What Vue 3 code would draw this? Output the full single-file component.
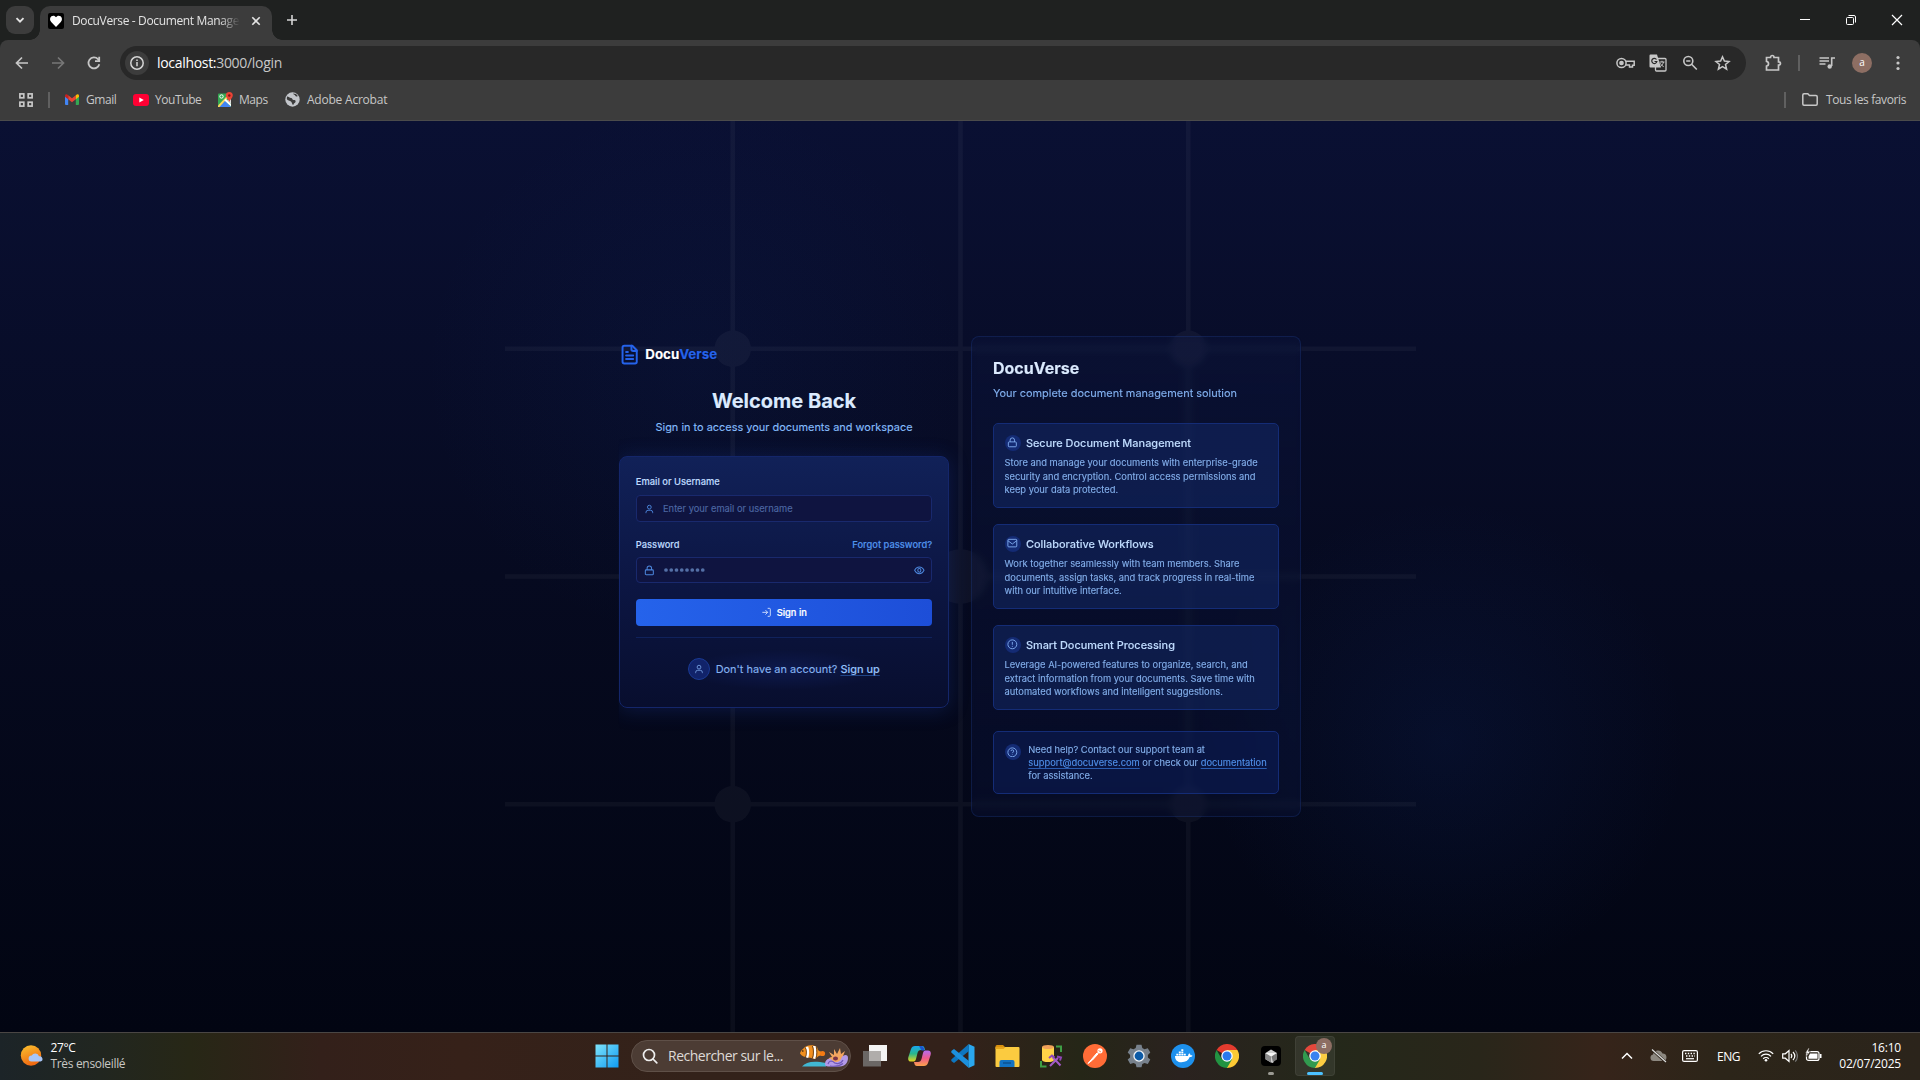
<script setup>
const bookmarks = [
  { id: 'gmail', label: 'Gmail' },
  { id: 'youtube', label: 'YouTube' },
  { id: 'maps', label: 'Maps' },
  { id: 'acrobat', label: 'Adobe Acrobat' },
]

const features = [
  {
    icon: 'lock',
    title: 'Secure Document Management',
    lines: [
      'Store and manage your documents with enterprise-grade',
      'security and encryption. Control access permissions and',
      'keep your data protected.',
    ],
  },
  {
    icon: 'mail',
    title: 'Collaborative Workflows',
    lines: [
      'Work together seamlessly with team members. Share',
      'documents, assign tasks, and track progress in real-time',
      'with our intuitive interface.',
    ],
  },
  {
    icon: 'alert',
    title: 'Smart Document Processing',
    lines: [
      'Leverage AI-powered features to organize, search, and',
      'extract information from your documents. Save time with',
      'automated workflows and intelligent suggestions.',
    ],
  },
]

const nodes = [
  { x: 200, y: 200, r: 16 },
  { x: 600, y: 200, r: 16 },
  { x: 400, y: 400, r: 24 },
  { x: 200, y: 600, r: 16 },
  { x: 600, y: 600, r: 16 },
]
</script>

<template>
  <div class="screen">
    <header class="browser">
      <div class="tabstrip">
        <div class="tab-search">
          <svg width="28" height="28" viewBox="0 0 28 28"><path d="M10.500 12.200 14 15.700l3.500-3.500" fill="none" stroke="#e3e3e3" stroke-width="1.900" /></svg>
        </div>
        <div class="tab">
          <svg class="favicon" width="16" height="16" viewBox="0 0 16 16">
            <rect width="16" height="16" rx="2" fill="#000" />
            <path d="M8 14 3.200 9C1.500 7.200 1.700 4.500 3.400 3.300 5 2.100 7.100 2.600 8 4.200c.9-1.600 3-2.100 4.600-.9 1.700 1.200 1.900 3.900.2 5.700z" fill="#fff" />
          </svg>
          <span class="tab-title">DocuVerse - Document Manage</span>
          <svg class="tab-close" width="10" height="10" viewBox="0 0 10 10"><path d="m1.300 1.300 7.400 7.400m0-7.400L1.300 8.700" stroke="#e3e3e3" stroke-width="1.600" /></svg>
        </div>
        <svg class="new-tab" width="12" height="12" viewBox="0 0 12 12"><path d="M6 1v10M1 6h10" stroke="#d5d5d5" stroke-width="1.600" /></svg>
        <div class="window-controls">
          <svg width="12" height="12" viewBox="0 0 12 12"><path d="M1 5.500h10" stroke="#fff" /></svg>
          <svg width="12" height="12" viewBox="0 0 12 12" fill="none" stroke="#fff"><rect x="1.500" y="3.500" width="7" height="7" rx="1" /><path d="M3.500 1.500H9a1.500 1.500 0 0 1 1.500 1.500v5.500" /></svg>
          <svg width="12" height="12" viewBox="0 0 12 12"><path d="m1 1 10 10m0-10L1 11" stroke="#fff" stroke-width="1.200" /></svg>
        </div>
      </div>

      <div class="toolbar">
        <div class="nav">
          <svg width="16" height="16" viewBox="0 0 16 16" fill="none" stroke="#c7c7c7" stroke-width="1.700"><path d="M14 8H3M8 2.500 2.500 8 8 13.500" /></svg>
          <svg width="16" height="16" viewBox="0 0 16 16" fill="none" stroke="#777" stroke-width="1.700"><path d="M2 8h11M8 2.500 13.500 8 8 13.500" /></svg>
          <svg width="16" height="16" viewBox="0 0 16 16" fill="none" stroke="#c7c7c7" stroke-width="1.800"><path d="M13.300 9.200A5.500 5.500 0 1 1 12 4.200l1.200 1.300" /><path d="M13.200 1.800v4.300H9" /></svg>
        </div>
        <div class="omnibox">
          <span class="site-info">
            <svg width="16" height="16" viewBox="0 0 16 16" fill="none" stroke="#d5d5d5" stroke-width="1.500"><circle cx="8" cy="8" r="6.200" /><path d="M8 7v4.200M8 4.600v1.500" /></svg>
          </span>
          <span class="url"><span class="host">localhost:</span>3000/login</span>
          <div class="omni-icons">
            <svg width="20" height="16" viewBox="0 0 20 16" fill="none" stroke="#c7c7c7" stroke-width="1.500"><circle cx="6.500" cy="8" r="4.600" /><circle cx="6.500" cy="8" r="1.600" fill="#c7c7c7" /><path d="M10.800 6.200h8.400v4h-1.700V12h-3v-2H10.800" /></svg>
            <svg width="18" height="18" viewBox="0 0 18 18"><rect x="6.500" y="4.500" width="10.500" height="12.500" rx="1" fill="none" stroke="#c7c7c7" stroke-width="1.300" /><path d="M1.500.5H8l4 13H1.500a1 1 0 0 1-1-1v-11a1 1 0 0 1 1-1z" fill="#c7c7c7" /><path d="M7.500 5.500a2.600 2.600 0 1 0 .4 2H5.500" fill="none" stroke="#282828" stroke-width="1.200" /><path d="M10.500 8H15.500M13 6.800V8m1.500 0c-.5 2.200-1.800 3.700-3 4.500m-.2-3.200c1 1.800 2.200 2.700 3.400 3.400" fill="none" stroke="#c7c7c7" /></svg>
            <svg width="16" height="16" viewBox="0 0 16 16" fill="none" stroke="#c7c7c7" stroke-width="1.600"><circle cx="6.300" cy="6" r="4.500" /><path d="M4.200 6h4.200M9.600 9.300l5.200 5.200" /></svg>
            <svg width="17" height="16" viewBox="0 0 17 16" fill="none" stroke="#c7c7c7" stroke-width="1.500"><path d="m8.500 1.900 1.900 4.200 4.600.4-3.500 3 1.100 4.600-4.100-2.500-4.100 2.500 1.100-4.600-3.500-3 4.600-.4z" /></svg>
          </div>
        </div>
        <div class="actions">
          <svg width="18" height="18" viewBox="0 0 18 18" fill="none" stroke="#c7c7c7" stroke-width="1.700"><path d="M2.500 3.500H6.500C6.500.8 10 .8 10 3.500h4.500v4.300c2.600 0 2.600 3.200 0 3.200v5h-12v-3.800c2.700-.5 2.700-4.300 0-4.800z" /></svg>
          <i class="rule" />
          <svg width="16" height="14" viewBox="0 0 16 14" fill="none" stroke="#c7c7c7" stroke-width="1.600"><path d="M.5 2h9.500M.5 5h9.500M.5 8h6M12.700 10V2H16" /><circle cx="10.700" cy="10.500" r="2.200" fill="#c7c7c7" stroke="none" /></svg>
          <span class="avatar">a</span>
          <svg width="4" height="16" viewBox="0 0 4 16" fill="#c7c7c7"><circle cx="2" cy="2.500" r="1.600" /><circle cx="2" cy="8" r="1.600" /><circle cx="2" cy="13.500" r="1.600" /></svg>
        </div>
      </div>

      <div class="bookmarks">
        <svg class="apps" width="14" height="14" viewBox="0 0 14 14" fill="none" stroke="#c7c7c7" stroke-width="1.700"><rect x=".9" y=".9" width="3.900" height="3.900" /><rect x="9.200" y=".9" width="3.900" height="3.900" /><rect x=".9" y="9.200" width="3.900" height="3.900" /><rect x="9.200" y="9.200" width="3.900" height="3.900" /></svg>
        <i class="rule" />
        <div v-for="b in bookmarks" :key="b.id" class="bookmark" :class="b.id">
          <svg v-if="b.id === 'gmail'" width="14" height="11" viewBox="0 0 14 11"><path d="M0 1.500V10a1 1 0 0 0 1 1h2.200V4z" fill="#4285f4" /><path d="M14 1.500V10a1 1 0 0 1-1 1h-2.200V4z" fill="#34a853" /><path d="M3.200 1.200 7 4.200l3.800-3v4L7 8.200 3.200 5.200z" fill="#ea4335" /><path d="M0 1.800C0 .2 1.700-.4 3.200 1.200v4L0 2.800z" fill="#c5221f" /><path d="M14 1.800c0-1.600-1.700-2.200-3.200-.6v4L14 2.800z" fill="#fbbc04" /></svg>
          <svg v-else-if="b.id === 'youtube'" width="16" height="12" viewBox="0 0 16 12"><rect width="16" height="12" rx="3" fill="#ff0033" /><path d="m6.300 3.500 4.500 2.500-4.500 2.500z" fill="#fff" /></svg>
          <svg v-else-if="b.id === 'maps'" width="15" height="15" viewBox="0 0 15 15"><rect y="1.500" width="13" height="13.500" rx="1" fill="#34a853" /><path d="M1 15 7 8.500 13 15z" fill="#4285f4" /><path d="m9 8 4 4v-5z" fill="#ddd" /><path d="m0 13.500 8.500-9 1.200 1.500L1.500 15H0z" fill="#fbd75b" /><path d="m6.200 8.300 1.600-1.600L13 12v2.500z" fill="#fff" /><circle cx="3.500" cy="4.500" r="1.700" fill="none" stroke="#fff" /><path d="M11.300 0a3.500 3.500 0 0 1 3.500 3.500c0 2.200-2.500 3.500-3.500 6.500-1-3-3.500-4.300-3.500-6.500A3.500 3.500 0 0 1 11.300 0z" fill="#ea4335" /><circle cx="11.300" cy="3.500" r="1.200" fill="#811411" /></svg>
          <svg v-else width="15" height="15" viewBox="0 0 15 15"><circle cx="7.500" cy="7.500" r="7.200" fill="#c3c6cb" /><path d="M2 4.500c2 .3 2.500 1.500 4 1.500 1.700 0 1 2 2.700 2 1.500 0 2.300.5 1.800 2s-2 1-2.200 3c-1.500-.3-1-2.500-2.300-3.500C4.800 8.500 2.500 8.500 1.800 7zM8 1.500c.5 1.500 2 1 2.300 2.300.2 1 1.700 1 2.500.2L11 2z" fill="#3c3c3c" /></svg>
          <span>{{ b.label }}</span>
        </div>
        <div class="all-bookmarks">
          <i class="rule" />
          <svg width="16" height="13" viewBox="0 0 16 13" fill="none" stroke="#c7c7c7" stroke-width="1.500"><path d="M.8 11V2a1.200 1.200 0 0 1 1.200-1.200h3.800l1.700 1.700H14a1.200 1.200 0 0 1 1.200 1.200V11a1.200 1.200 0 0 1-1.200 1.200H2A1.200 1.200 0 0 1 .8 11z" /></svg>
          <span>Tous les favoris</span>
        </div>
      </div>
    </header>

    <main class="page">
      <svg class="grid-art" viewBox="0 0 800 800">
        <path d="M0 200h800M0 400h800M0 600h800M200 0v800M400 0v800M600 0v800" stroke="#fff" stroke-width="4" fill="none" />
        <circle v-for="(n, i) in nodes" :key="i" :cx="n.x" :cy="n.y" :r="n.r" fill="#fff" />
      </svg>

      <div class="content">
        <section class="login">
          <div class="brand">
            <svg class="brand-icon" viewBox="0 0 24 24"><path d="M15 2H6a2 2 0 0 0-2 2v16a2 2 0 0 0 2 2h12a2 2 0 0 0 2-2V7z" /><path d="M14 2v4a2 2 0 0 0 2 2h4M10 9H8M16 13H8M16 17H8" /></svg>
            <span class="brand-name">Docu<b>Verse</b></span>
          </div>
          <h1>Welcome Back</h1>
          <p class="sub">Sign in to access your documents and workspace</p>

          <form class="card" @submit.prevent>
            <label class="lbl">Email or Username</label>
            <div class="field">
              <svg class="fi user" viewBox="0 0 24 24"><circle cx="12" cy="7.500" r="4.500" /><path d="M4 22v-2a5 5 0 0 1 5-5h6a5 5 0 0 1 5 5v2" /></svg>
              <span class="ph">Enter your email or username</span>
            </div>
            <div class="row">
              <label class="lbl">Password</label>
              <a class="forgot">Forgot password?</a>
            </div>
            <div class="field pw">
              <svg class="fi" viewBox="0 0 24 24"><rect x="3" y="11" width="18" height="11" rx="2" /><path d="M7 11V7a5 5 0 0 1 10 0v4" /></svg>
              <svg class="dots" width="42" height="4" viewBox="0 0 42 4"><circle v-for="d in 8" :key="d" :cx="d * 5.250 - 3.250" cy="2" r="1.850" /></svg>
              <svg class="fi eye" viewBox="0 0 24 24"><path d="M1.500 12C3.500 7.500 7.500 4.500 12 4.500S20.500 7.500 22.500 12c-2 4.500-6 7.500-10.500 7.500S3.500 16.500 1.500 12z" /><ellipse cx="12" cy="12" rx="3.500" ry="4.200" /></svg>
            </div>
            <button class="btn">
              <svg viewBox="0 0 24 24"><path d="M15 3h4a2 2 0 0 1 2 2v14a2 2 0 0 1-2 2h-4M10 17l5-5-5-5M15 12H3" /></svg>
              Sign in
            </button>
            <div class="signup">
              <span class="badge"><svg viewBox="0 0 24 24"><circle cx="12" cy="7.500" r="4.500" /><path d="M4 22v-2a5 5 0 0 1 5-5h6a5 5 0 0 1 5 5v2" /></svg></span>
              <span class="ask">Don't have an account? <a>Sign up</a></span>
            </div>
          </form>
        </section>

        <aside class="panel">
          <h2>DocuVerse</h2>
          <p class="panel-sub">Your complete document management solution</p>
          <article v-for="f in features" :key="f.icon" class="feature">
            <div class="f-head">
              <span class="f-icon">
                <svg v-if="f.icon === 'lock'" viewBox="0 0 24 24"><rect x="3" y="11" width="18" height="11" rx="2" /><path d="M7 11V7a5 5 0 0 1 10 0v4" /></svg>
                <svg v-else-if="f.icon === 'mail'" viewBox="0 0 24 24"><rect x="2" y="3" width="20" height="17" rx="2" /><path d="m2 6 10 7.500L22 6" /></svg>
                <svg v-else viewBox="0 0 24 24"><circle cx="12" cy="12" r="10" /><path d="M12 6.500v6.500M12 15.500v2" /></svg>
              </span>
              <h3>{{ f.title }}</h3>
            </div>
            <p><span v-for="l in f.lines" :key="l">{{ l }}</span></p>
          </article>
          <div class="help">
            <span class="f-icon"><svg viewBox="0 0 24 24"><circle cx="12" cy="12" r="10" /><path d="M9 9.200a3 3 0 0 1 6 .3c0 2-3 2.500-3 4.300M12 16.500v1.200" /></svg></span>
            <p>
              <span>Need help? Contact our support team at</span>
              <span><a>support@docuverse.com</a> or check our <a>documentation</a></span>
              <span>for assistance.</span>
            </p>
          </div>
        </aside>
      </div>
    </main>

    <footer class="taskbar">
      <div class="weather">
        <svg width="24" height="24" viewBox="0 0 24 24"><defs><linearGradient id="sun" x1="0" y1="0" x2=".4" y2="1"><stop offset="0" stop-color="#fbc32f" /><stop offset="1" stop-color="#f06a12" /></linearGradient></defs><circle cx="11" cy="11.500" r="10.200" fill="url(#sun)" /><path d="M11.500 17.500a3 3 0 0 1 .2-6 4 4 0 0 1 7.300.8 2.700 2.700 0 0 1 1.500 5.200z" fill="#a9c6f7" /></svg>
        <div class="w-text"><span>27°C</span><span class="dim">Très ensoleillé</span></div>
      </div>

      <div class="apps-row">
        <span class="slot start">
          <svg width="24" height="24" viewBox="0 0 24 24"><defs><linearGradient id="win" x1="0" y1="0" x2="1" y2="1"><stop offset="0" stop-color="#7ee3fb" /><stop offset="1" stop-color="#0f9bf2" /></linearGradient></defs><path d="M.5.500h11v11H.5zM12.500.5h11v11h-11zM.5 12.500h11v11H.5zM12.500 12.500h11v11h-11z" fill="url(#win)" /></svg>
        </span>
        <div class="search">
          <svg width="16" height="16" viewBox="0 0 16 16" fill="none" stroke="#eee" stroke-width="1.700"><circle cx="7" cy="7" r="5.500" /><path d="m11 11 3.800 3.800" stroke-linecap="round" /></svg>
          <span>Rechercher sur le...</span>
          <svg class="fish" width="50" height="24" viewBox="0 0 50 24">
            <path d="M3 22.500c4-5 12-6 24-3.500v3.500z" fill="#41b8d3" />
            <path d="M4 5C6 1 14 0 18 3l1 3c1 1 2 1.500 3 1.500v4c-1.500 0-2.500.5-3.500 1.500L16 15c-2 0-3-1-5-1.200C6 13.500 2.500 12 1 9.500 1.500 7.500 2.500 6 4 5z" fill="#f2901f" />
            <path d="M6.500 3.300c1.600 3 1.600 6.500.3 10l2.400.6c1.300-3.800 1.300-7.500 0-11.500zM14 2c1.400 3.500 1.400 8.500 0 12.300l2.300.6c1.200-3.500 1.400-9 .3-13z" fill="#fff" />
            <path d="M6.200 3.300c1.600 3 1.600 6.500.3 10M13.400 2c1.400 3.500 1.400 8.500 0 12.300M17.200 2.500c1 3.500.9 8.500-.2 12" stroke="#3b2617" stroke-width=".7" fill="none" />
            <circle cx="3.800" cy="7" r=".8" fill="#20150f" />
            <circle cx="23.500" cy="9.500" r="2.600" fill="#f47a13" />
            <path d="M30 20c-2-3-1-7 3-7l-3-5 5 3 0-6 3 5 3-6 1 6 4-3-2 5c4 1 4 5 2 7z" fill="#f3a55f" />
            <path d="M26 20c0-4 3-6 6-5 2 4 8 4 10 0 1-4 7-6 7-1 0 5-3 8-8 8.500H29c-2 0-3-1-3-2.500z" fill="#b39ae8" />
            <path d="M29 20c1-3 3-3.500 5-2.500 2 3 8 3 10-1.500M31 22c4 .5 9 .5 13-2.500" fill="none" stroke="#6f58b8" stroke-width="1.200" />
            <ellipse cx="36.500" cy="14.500" rx="2.500" ry="2" fill="#7a3348" />
          </svg>
        </div>
        <span class="slot view"><svg width="24" height="22" viewBox="0 0 24 22"><rect x="6" width="18" height="16" fill="#f4f4f4" /><path d="M0 6h18v15.500H0z" fill="#6b6765" /><path d="M6 6h12v10H6z" fill="#b0adab" /></svg></span>
        <span class="slot"><svg width="23" height="22" viewBox="0 0 23 22"><defs><linearGradient id="cpa" x1="0" y1="0" x2="0" y2="1"><stop offset="0" stop-color="#18a7f0" /><stop offset=".5" stop-color="#29b78c" /><stop offset="1" stop-color="#e9d51c" /></linearGradient><linearGradient id="cpb" x1="0" y1="0" x2="0" y2="1"><stop offset="0" stop-color="#b46cf0" /><stop offset=".5" stop-color="#ee5a8c" /><stop offset="1" stop-color="#fba24a" /></linearGradient></defs><path d="M7 1h7c2 0 2.500 1.500 3 4l-4 0c-2 0-3 1-3.500 3L8 14c-.5 2-1.500 2.500-3 2.500H3c-2.500 0-3.300-2-2.600-4.500L3 4C3.700 2 5 1 7 1z" fill="url(#cpa)" /><path d="M16 21H9c-2 0-2.500-1.500-3-4h4c2 0 3-1 3.500-3L15 8c.5-2 1.500-2.500 3-2.500h2c2.500 0 3.300 2 2.600 4.500L20 18c-.7 2-2 3-4 3z" fill="url(#cpb)" /><path d="M13 1c2 0 3 1.500 3.500 4.500h-3L11 1z" fill="#1c54cf" /></svg></span>
        <span class="slot"><svg width="24" height="24" viewBox="0 0 24 24"><path d="m17.500 0 6 2.700v18.600l-6 2.700z" fill="#2aa7ee" /><path d="M17.500.2 18 7 3 19l-2.700-2V15.500z" fill="#0e76c0" /><path d="M17.500 23.800 18 17 3 5 .3 7v1.500z" fill="#1c8fdd" /></svg></span>
        <span class="slot"><svg width="25" height="22" viewBox="0 0 25 22"><path d="M.5 1.500A1.500 1.500 0 0 1 2 0h6l2.500 2.500H.5z" fill="#d8900f" /><rect x=".5" y="2" width="24" height="20" rx="1" fill="#fbcb40" /><path d="M.5 4h8l2-2H.5z" fill="#e5a41c" /><path d="M4.500 22v-5a2 2 0 0 1 2-2h11a2 2 0 0 1 2 2v5z" fill="#1272c2" /><path d="M8 18h8" stroke="#0c4f8c" stroke-width="1.400" /></svg></span>
        <span class="slot"><svg width="23" height="24" viewBox="0 0 23 24"><path d="M2 3h12v13H2z" fill="#ffd348" /><ellipse cx="8" cy="16" rx="6" ry="2" fill="#ffd348" /><ellipse cx="8" cy="3" rx="6" ry="2" fill="#f1a25a" /><path d="M16 2.500h5V8M1 17v5.500h5.500" fill="none" stroke="#3f9e45" stroke-width="2" /><path d="m10 22 8-8M12.500 13l8 8.500" stroke="#a45ac9" stroke-width="2" /><path d="m9 14 3-2.500 2.500 2M17 12.500l4 1-1 3" fill="none" stroke="#8f46b5" stroke-width="2" /></svg></span>
        <span class="slot"><svg width="24" height="24" viewBox="0 0 24 24"><circle cx="12" cy="12" r="12" fill="#ff6c37" /><path d="m5 19.500 3-3.500 5.500-6.500c1-1.200 2-.2 1.300.7L9.500 16zM13 9l2 2" stroke="#fff" stroke-width="1" fill="#fff" /><circle cx="17" cy="6.800" r="2.600" fill="#fff" /><path d="M15.500 6.500 18 8" stroke="#ff6c37" stroke-width=".8" /></svg></span>
        <span class="slot"><svg width="24" height="24" viewBox="0 0 24 24"><path d="M9.500.8h5l.8 3.300 2.200 1.200 3.300-1 2.500 4.300-2.400 2.300v2.500l2.400 2.200-2.500 4.300-3.300-1-2.200 1.200-.8 3.200h-5l-.8-3.200-2.200-1.200-3.300 1-2.500-4.300 2.400-2.200v-2.500L.7 8.600l2.500-4.300 3.300 1 2.200-1.200z" fill="#77818c" /><circle cx="12" cy="12" r="5.700" fill="#f0f4f8" /><circle cx="12" cy="12" r="4.400" fill="#0c5aa6" /></svg></span>
        <span class="slot"><svg width="24" height="24" viewBox="0 0 24 24"><circle cx="12" cy="12" r="12" fill="#1d90ed" /><path d="M4 12h13c.3-1.500.7-2.300 1.300-2.700.8.6 1.200 1.300 1.200 2 .8-.1 1.400 0 2 .4-.6 1-1.500 1.400-2.800 1.400C17.500 16.500 14.500 18.300 10.500 18.300 6.500 18.300 4 16 4 12z" fill="#fff" /><path d="M5.300 9.700h2v1.800h-2zM7.800 9.700h2v1.800h-2zM10.300 9.700h2v1.800h-2zM12.800 9.700h2v1.800h-2zM7.800 7.500h2v1.700h-2zM10.300 7.500h2v1.700h-2zM10.300 5.300h2V7h-2z" fill="#fff" /></svg></span>
        <span class="slot"><svg width="24" height="24" viewBox="0 0 48 48"><path d="M24 24 3.200 12A24 24 0 0 1 44.800 12z" fill="#e33b2e" /><path d="M24 24V12h20.800A24 24 0 0 1 24 48z" fill="#fcc934" /><path d="M24 48A24 24 0 0 1 3.200 12l10.400 18L24 24l10.400 6z" fill="#229342" /><circle cx="24" cy="24" r="11.500" fill="#fff" /><circle cx="24" cy="24" r="9" fill="#2b79ee" /></svg></span>
        <span class="slot running"><svg width="20" height="20" viewBox="0 0 20 20"><rect width="20" height="20" rx="4" fill="#000" /><path d="M10 3.500 16 7v2.500L12 17l-2-.5-5.500-3.300V7z" fill="#cfcfcf" /><path d="M4.500 7 10 10.500v6L4.500 13.200z" fill="#8b8b8b" /><path d="M4.500 7H16l-5.500 3.500z" fill="#f5f5f5" /><path d="M10.500 10.500 16 7v6.500L12 16z" fill="#777" /></svg></span>
        <span class="slot current">
          <svg width="24" height="24" viewBox="0 0 48 48"><path d="M24 24 3.200 12A24 24 0 0 1 44.800 12z" fill="#e33b2e" /><path d="M24 24V12h20.800A24 24 0 0 1 24 48z" fill="#fcc934" /><path d="M24 48A24 24 0 0 1 3.200 12l10.400 18L24 24l10.400 6z" fill="#229342" /><circle cx="24" cy="24" r="11.500" fill="#fff" /><circle cx="24" cy="24" r="9" fill="#2b79ee" /></svg>
          <span class="mini">a</span>
        </span>
      </div>

      <div class="tray">
        <svg class="t-chev" width="12" height="8" viewBox="0 0 12 8"><path d="m1 6.500 5-5 5 5" fill="none" stroke="#fff" stroke-width="1.500" /></svg>
        <svg class="t-cloud" width="17" height="14" viewBox="0 0 17 14"><path d="M3.500 12A3.300 3.300 0 0 1 3 5.500 5 5 0 0 1 12.500 4.500a3.800 3.800 0 0 1 1 7.500z" fill="#8d8880" /><path d="m1.500 0 14 13" stroke="#2d241a" stroke-width="2.600" /><path d="m2 .5 14 12.500" stroke="#ddd" stroke-width="1.200" /></svg>
        <svg class="t-kbd" width="16" height="12" viewBox="0 0 16 12"><rect x=".6" y=".6" width="14.800" height="10.800" rx="1.500" fill="none" stroke="#fff" stroke-width="1.200" /><path d="M3 3.500h10M4 6h9" stroke="#fff" stroke-width="1.300" stroke-dasharray="1.400 1.400" /><path d="M4 8.700h8" stroke="#fff" stroke-width="1.200" /></svg>
        <span class="lang">ENG</span>
        <svg class="t-wifi" width="16" height="13" viewBox="0 0 16 13" fill="none" stroke="#fff" stroke-width="1.200"><path d="M.8 4.800a10 10 0 0 1 14.400 0M3 7.300a7 7 0 0 1 10 0M5.200 9.700a4 4 0 0 1 5.600 0" /><circle cx="8" cy="11.200" r="1.300" fill="#fff" stroke="none" /></svg>
        <svg class="t-vol" width="16" height="14" viewBox="0 0 16 14" fill="none" stroke="#fff" stroke-width="1.200"><path d="M.7 4.800v4.400h2.600L7 12.500v-11L3.300 4.800zM9 5c1 1.200 1 2.800 0 4M11 3c2.200 2.400 2.200 5.600 0 8" /><path d="M13.200 1.300c3 3.200 3 8.200 0 11.400" stroke="#777" /></svg>
        <svg class="t-bat" width="17" height="14" viewBox="0 0 17 14"><rect x="1.500" y="3.600" width="12.500" height="8.800" rx="2" fill="none" stroke="#fff" stroke-width="1.200" /><path d="M5 5.500h7.500v5.200H3.500V8.500zM14.800 6h1.700v4h-1.700z" fill="#fff" /><path d="M3.500 0 .3 5h2L1.500 8.500 5.300 3.500H3.200L4.300.3z" fill="#fff" stroke="#2d241a" stroke-width=".5" /></svg>
        <div class="clock"><span>16:10</span><span>02/07/2025</span></div>
      </div>
    </footer>
  </div>
</template>

<style>
body { margin: 0; background: #030614; overflow: hidden; }
</style>

<style scoped>
.screen {
  width: 1920px; height: 1080px; display: flex; flex-direction: column; overflow: hidden;
  font-family: "Open Sans", "Noto Sans", sans-serif; font-size: 12px; color: #e3e3e3;
}
svg { display: block; flex: none; }
h1, h2, h3, p { margin: 0; }

/* Browser frame */
.browser { height: 121px; flex: none; background: #1f2120; display: flex; flex-direction: column; box-sizing: border-box; }
.tabstrip { height: 40px; display: flex; align-items: flex-start; padding-left: 6px; }
.tab-search { margin-top: 6px; width: 28px; height: 28px; border-radius: 9px; background: #3c3c3c; }
.tab {
  position: relative; margin: 6px 0 0 6px; width: 232px; height: 34px; box-sizing: border-box; background: #3c3c3c;
  border-radius: 10px 10px 0 0; display: flex; align-items: center; padding: 0 11px 5px 8px;
}
.tab::before, .tab::after { content: ""; position: absolute; bottom: 0; width: 10px; height: 10px; }
.tab::before { left: -10px; background: radial-gradient(circle at 0 0, transparent 9.500px, #3c3c3c 10px); }
.tab::after { right: -10px; background: radial-gradient(circle at 100% 0, transparent 9.500px, #3c3c3c 10px); }
.tab-title {
  margin-left: 8px; width: 169px; white-space: nowrap; letter-spacing: -0.36px; line-height: 18px;
  -webkit-mask-image: linear-gradient(90deg, #000 148px, transparent 168px); mask-image: linear-gradient(90deg, #000 148px, transparent 168px);
}
.tab-close { margin-left: 10.500px; }
.new-tab { margin: 14px 0 0 14px; }
.window-controls { margin-left: auto; display: flex; gap: 34px; padding: 14px 17px 0 0; }
.toolbar { height: 46px; background: #3c3c3c; border-radius: 8px 8px 0 0; display: flex; align-items: center; padding: 0 20px 0 14px; }
.nav { display: flex; gap: 20px; width: 106px; flex: none; }
.omnibox { width: 1626px; flex: none; height: 34px; background: #282828; border-radius: 17px; display: flex; align-items: center; box-sizing: border-box; padding: 0 15px 0 5px; }
.site-info { width: 24px; height: 24px; border-radius: 50%; background: #3c3c3c; display: grid; place-items: center; }
.url { margin-left: 8px; font-size: 14px; letter-spacing: -0.31px; color: #c7c7c7; line-height: 20px; }
.host { color: #fff; }
.omni-icons { margin-left: auto; display: flex; align-items: center; gap: 14px; }
.omni-icons svg:nth-child(3) { margin-left: 1px; }
.omni-icons svg:nth-child(4) { margin-left: 2px; }
.actions { display: flex; align-items: center; flex: none; width: 154px; box-sizing: border-box; padding-left: 18px; }
.rule { display: block; flex: none; width: 2px; height: 16px; background: #606060; }
.actions .rule { margin: 0 19px 0 16px; }
.avatar { flex: none; margin: 0 24px 0 17px; width: 20px; height: 20px; border-radius: 50%; background: #8d6e63; color: #fff; font-size: 10px; line-height: 18px; text-align: center; }
.bookmarks { flex: 1; background: #3c3c3c; border-bottom: 1px solid #4b4b4b; display: flex; align-items: center; padding: 0 14px 7px 19px; color: #c7c7c7; }
.bookmarks .rule { margin: 0 15px 0 15px; }
.bookmark { display: flex; align-items: center; line-height: 16px; letter-spacing: -0.42px; white-space: nowrap; }
.bookmark span { margin-left: 7px; }
.gmail { width: 68px; }
.youtube { width: 85px; }
.youtube span { margin-left: 6px; }
.maps { width: 67px; }
.maps span { margin-left: 6px; }
.acrobat { letter-spacing: -0.22px; }
.all-bookmarks { margin-left: auto; display: flex; align-items: center; letter-spacing: -0.39px; line-height: 16px; }
.all-bookmarks span { margin-left: 8px; }
.all-bookmarks .rule { margin-right: 16px; }

/* Page */
.page {
  position: relative; height: 911px; flex: none; display: flex; align-items: center; justify-content: center; overflow: hidden;
  font-family: "Inter", "Liberation Sans", sans-serif;
  background:
    radial-gradient(circle 270px at 695px 250px, rgba(20, 60, 150, .08), transparent),
    radial-gradient(circle 240px at 1445px 620px, rgba(20, 60, 150, .13), transparent),
    linear-gradient(180deg, #0a1033 0%, #060a20 50%, #020512 100%);
}
.grid-art { position: absolute; left: 504.500px; top: 0; width: 911px; height: 911px; opacity: .035; }
.content { position: relative; display: flex; align-items: flex-start; gap: 21.300px; width: 682.660px; -webkit-text-stroke: .12px currentColor; }
.login { width: 330.670px; padding-top: 8px; }
.brand { display: flex; align-items: center; height: 21.300px; }
.brand-icon { width: 21.300px; height: 21.300px; fill: none; stroke: #2563eb; stroke-width: 2.200; stroke-linecap: round; stroke-linejoin: round; }
.brand-name { margin-left: 5.300px; font-size: 13.333px; font-weight: 700; color: #fff; line-height: 20px; }
.brand-name b { color: #2563eb; font-weight: 700; }
h1 { margin-top: 24.300px; font-size: 20px; line-height: 24px; font-weight: 700; color: #dbeafe; text-align: center; }
.sub { margin-top: 5.300px; font-size: 10.950px; line-height: 16px; color: #85bcfb; text-align: center; }
.card {
  margin-top: 21.600px; height: 251.300px; box-sizing: border-box; border: 1px solid #14266a; border-radius: 8px; padding: 17.500px 16.200px 0 16.200px;
  background: linear-gradient(180deg, #112158 0%, #0c1643 50%, #080e2e 100%);
  box-shadow: 0 2px 20px rgba(30, 64, 160, .3);
  clip-path: inset(-24px -24px -24px 0);
}
.lbl { display: block; font-size: 9.333px; line-height: 13.330px; font-weight: 500; color: #bfdbfe; }
.field { margin-top: 7.300px; height: 26.500px; box-sizing: border-box; border: 1px solid #19296d; border-radius: 4px; background: #0f1440; display: flex; align-items: center; padding: 0 6.500px 0 7.500px; }
.field.pw { margin-top: 5.700px; height: 26px; }
.fi { width: 10.670px; height: 10.670px; fill: none; stroke: #4c86dc; stroke-width: 2.300; }
.fi.user { height: 10px; }
.ph { margin-left: 8px; font-size: 9.333px; line-height: 14px; color: #4d68a4; }
.row { margin-top: 16.400px; display: flex; justify-content: space-between; }
.forgot { font-size: 9.333px; line-height: 13.330px; font-weight: 500; color: #5295ee; }
.dots { margin-left: 8.500px; fill: #5470a6; }
.fi.eye { margin-left: auto; }
.btn {
  margin: 15.600px 0 0; width: 100%; height: 27px; border: 0; border-radius: 4px; background: linear-gradient(90deg, #2563eb, #1d4ed8);
  color: #fff; font: 500 9.333px "Inter", "Liberation Sans", sans-serif; -webkit-text-stroke: .2px #fff; display: flex; align-items: center; justify-content: center; gap: 5px; padding: 0;
}
.btn svg { width: 10.670px; height: 10.670px; fill: none; stroke: #dbe6ff; stroke-width: 2; }
.signup {
  margin-top: 11px; border-top: 1px solid #10225c; height: 62px; display: flex; align-items: center; justify-content: center; gap: 5.500px;
  background: radial-gradient(ellipse 100px 20px at 50% 32px, rgba(29, 60, 170, .2), transparent);
}
.badge { width: 20px; height: 20px; border: 1px solid #1a3a94; border-radius: 50%; background: #11236a; display: grid; place-items: center; }
.badge svg { width: 10px; height: 10px; fill: none; stroke: #7ba6e8; stroke-width: 2; }
.ask { font-size: 10.950px; line-height: 16px; color: #85b2ef; }
.ask a { font-weight: 500; color: #94c0f8; text-decoration: underline; text-decoration-color: #204587; text-underline-offset: 2px; text-decoration-thickness: 1px; }

.panel {
  width: 330.670px; height: 481.300px; box-sizing: border-box; border: 1px solid rgba(30, 58, 138, .32); border-radius: 8px; padding: 21.300px 21.300px 0;
  background: linear-gradient(180deg, rgba(23, 50, 130, .10), rgba(20, 40, 110, .15)); backdrop-filter: blur(3px);
}
h2 { font-size: 16px; line-height: 21.330px; font-weight: 700; color: #dbeafe; }
.panel-sub { margin-top: 6px; font-size: 10.950px; line-height: 16px; color: #82b0ef; }
.feature { margin-top: 16.330px; height: 84.670px; box-sizing: border-box; border: 1px solid #142c76; border-radius: 5px; background: rgba(23, 46, 116, .45); padding: 10.670px; }
.panel-sub + .feature { margin-top: 21.600px; }
.f-head { display: flex; align-items: center; height: 16px; }
.f-icon { flex: none; width: 16px; height: 16px; border-radius: 50%; background: #142b74; display: grid; place-items: center; }
.f-icon svg { width: 10.670px; height: 10.670px; fill: none; stroke: #84b1f5; stroke-width: 2; }
h3 { margin-left: 5.300px; font-size: 10.950px; line-height: 16px; font-weight: 500; color: #bfdbfe; }
.feature p { margin-top: 5.500px; }
.feature p, .help p { font-size: 9.333px; line-height: 13.330px; color: #84b0ec; white-space: nowrap; }
.feature p span, .help p span { display: block; }
.help { margin-top: 21.300px; height: 63.330px; box-sizing: border-box; border: 1px solid #142c76; border-radius: 5px; background: rgba(18, 40, 116, .36); padding: 10.670px; display: flex; }
.help .f-icon { margin-top: 1.500px; }
.help p { margin-left: 7.700px; }
.help a { color: #5192ec; text-decoration: underline; text-decoration-color: #2a5cb0; text-underline-offset: 2px; text-decoration-thickness: 1px; }

/* Taskbar */
.taskbar {
  position: relative; height: 48px; flex: none; box-sizing: border-box; border-top: 1px solid #4a4644; padding-bottom: 1px; display: flex; align-items: center; color: #fff;
  background: linear-gradient(90deg, #1c2428 0, #212620 100px, #272716 190px, #33201a 320px, #362119 460px, #33221a 700px, #33211a 960px, #252617 1080px, #2a221f 1180px, #24281a 1330px, #29261a 1480px, #36241a 1600px, #2c2519 1720px, #2b241b 1920px);
}
.weather { width: 585px; display: flex; align-items: center; padding-left: 20px; box-sizing: border-box; }
.w-text { margin-left: 6.500px; display: flex; flex-direction: column; line-height: 16px; letter-spacing: -0.33px; margin-top: -1px; }
.dim { color: #c9c8c4; }
.apps-row { display: flex; align-items: center; }
.slot { position: relative; width: 44px; height: 40px; display: grid; place-items: center; }
.search {
  margin: 0 2px; width: 220px; height: 32px; box-sizing: border-box; border: 1px solid #5f5048; border-radius: 16px; background: #4c3c34;
  display: flex; align-items: center; padding-left: 10px; font-size: 14px; letter-spacing: -0.5px; color: #dedad7;
}
.search span { margin-left: 10px; white-space: nowrap; line-height: 18px; }
.search > svg:first-child { margin-top: -1px; }
.fish { margin-left: auto; margin-right: 1px; }
.running::after { content: ""; position: absolute; left: 19px; bottom: 1px; width: 6px; height: 3px; border-radius: 2px; background: #9b9a93; }
.current::before { content: ""; position: absolute; inset: 0 2px; border-radius: 4px; background: rgba(255, 255, 255, .07); border: 1px solid rgba(255, 255, 255, .06); box-sizing: border-box; }
.current::after { content: ""; position: absolute; left: 14px; bottom: 1px; width: 16px; height: 3px; border-radius: 2px; background: #4cc2ff; }
.mini { position: absolute; left: 23px; top: 2px; width: 16px; height: 16px; border-radius: 50%; background: #8d6e63; font-size: 9px; line-height: 14px; text-align: center; }
.tray { margin-left: auto; display: flex; align-items: center; padding-right: 19px; }
.t-chev { margin-top: -1px; }
.t-cloud { margin-left: 17px; }
.t-kbd { margin-left: 15px; margin-top: -1px; }
.lang { margin: 1px 0 0 19px; width: 22px; letter-spacing: -0.45px; }
.t-wifi { margin-left: 19px; margin-top: -1px; }
.t-vol { margin-left: 8px; margin-top: -1px; }
.t-bat { margin-left: 7px; margin-top: -2px; }
.clock { width: 79px; margin-top: -1px; display: flex; flex-direction: column; align-items: flex-end; line-height: 16px; letter-spacing: -0.2px; }
</style>
